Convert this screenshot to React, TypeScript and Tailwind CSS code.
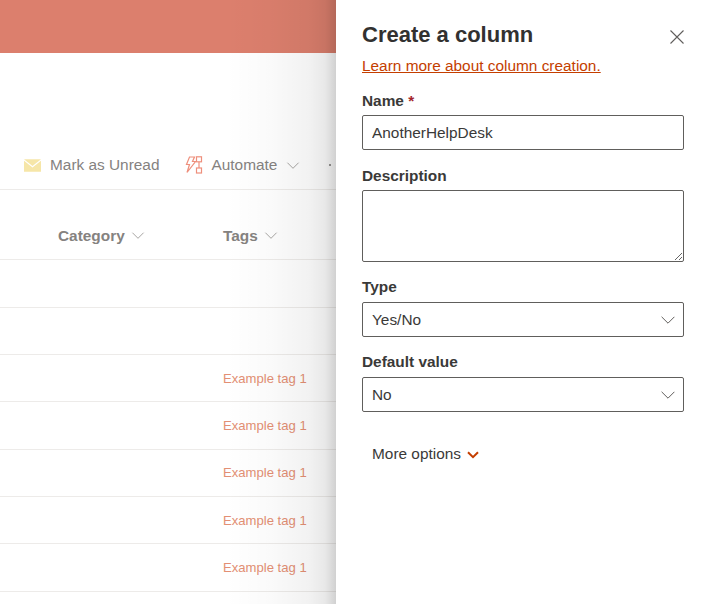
import React from "react";

const Chevron = ({ className = "" }: { className?: string }) => (
  <svg viewBox="0 0 14 8" fill="none" stroke="currentColor" strokeWidth="1" className={className}>
    <path d="M0.6 0.8 L7 7.2 L13.4 0.8" />
  </svg>
);

const Field = ({ label, required, tight, children }: { label: string; required?: boolean; tight?: boolean; children: React.ReactNode }) => (
  <div className="flex flex-col">
    <label className={tight ? "h-[23px] text-[15.4px] leading-[16px] font-bold text-[#3a3938]" : "h-[23px] text-[15.4px] leading-[17px] font-bold text-[#3a3938]"}>
      {label}
      {required && <span className="text-[#a4262c]"> *</span>}
    </label>
    {children}
  </div>
);

const Select = ({ value }: { value: string }) => (
  <div className="flex h-[35px] items-center justify-between rounded-[2px] border border-[#605e5c] pl-[9px] pr-[8px] text-[15.4px] text-[#3a3938]">
    <span>{value}</span>
    <Chevron className="h-[8px] w-[14px] text-[#605e5c]" />
  </div>
);

const rows = [false, false, true, true, true, true, true, false];

export default function App() {
  return (
    <div className="flex h-[604px] w-[710px] overflow-hidden bg-white font-['Liberation_Sans',Arial,sans-serif]">
      <div className="relative h-full w-[336px] shrink-0 overflow-hidden">
        <div className="h-[53px] bg-[#dc7f6d]" />
        <div className="flex h-[137px] items-end border-b border-[#edebe9] pb-[14px]">
          <div className="ml-[24px] flex h-[20px] items-center">
            <svg viewBox="0 0 18 13" className="h-[13px] w-[17px]">
              <path d="M0 0 H18 L9 7 Z" fill="#f6e6a8" />
              <path d="M0 1.6 L9 8.6 L18 1.6 V13 H0 Z" fill="#f6e6a8" />
            </svg>
            <span className="ml-[9px] text-[15.4px] text-[#85827f]">Mark as Unread</span>
            <svg viewBox="0 0 18 18" fill="none" stroke="#ee8f7c" strokeWidth="1.2" className="ml-[25px] h-[18px] w-[18px]">
              <rect x="11.5" y="0.8" width="5" height="5" />
              <rect x="11.5" y="12" width="5" height="5" />
              <path d="M14 6 V12" />
              <path d="M4.5 1 H9.5 L7.5 5.5 H10.5 L2 16.5 L4.5 8.5 H1.5 Z" />
            </svg>
            <span className="ml-[9px] text-[15.4px] text-[#85827f]">Automate</span>
            <Chevron className="ml-[9px] h-[7px] w-[14px] text-[#9a9896]" />
            <span className="ml-[29px] h-[2px] w-[2px] bg-[#9a9896]" />
          </div>
        </div>
        <div className="flex h-[70.4px] items-end border-b border-[#edebe9] pb-[12px] text-[15.4px] font-bold text-[#85827f]">
          <div className="ml-[58px] flex w-[165px] items-center">
            <span>Category</span>
            <Chevron className="ml-[6px] h-[7px] w-[14px] text-[#9a9896]" />
          </div>
          <div className="flex items-center">
            <span>Tags</span>
            <Chevron className="ml-[6px] h-[7px] w-[14px] text-[#9a9896]" />
          </div>
        </div>
        {rows.map((hasTag, i) => (
          <div key={i} className="flex h-[47.33px] items-center border-b border-[#edebe9] pl-[223px] pt-[0.5px] text-[13.1px] text-[#e38f74]">
            {hasTag && "Example tag 1"}
          </div>
        ))}
        <div className="pointer-events-none absolute inset-y-0 right-0 w-[110px] bg-[linear-gradient(to_right,#00000000_0%,#00000005_40%,#0000000d_75%,#00000017_90%,#0000002e_100%)]" />
      </div>
      <div className="relative flex h-full flex-1 flex-col bg-white px-[26px]">
        <h1 className="mt-[20px] h-[29px] text-[22px] leading-[29px] font-bold text-[#323130]">Create a column</h1>
        <a href="#" className="mt-[7px] h-[21px] text-[15.4px] leading-[20px] text-[#c43e00] underline">
          Learn more about column creation.
        </a>
        <div className="mt-[15px] flex flex-col gap-[17px]">
          <Field label="Name" required>
            <input
              readOnly
              value="AnotherHelpDesk"
              className="h-[35px] w-full rounded-[2px] border border-[#605e5c] px-[9px] text-[15.4px] text-[#3a3938] outline-none"
            />
          </Field>
          <Field label="Description">
            <textarea readOnly className="block h-[72px] w-full rounded-[2px] border border-[#605e5c] outline-none" />
          </Field>
          <Field label="Type" tight>
            <Select value="Yes/No" />
          </Field>
          <Field label="Default value" tight>
            <Select value="No" />
          </Field>
        </div>
        <div className="mt-[30px] ml-[10px] flex items-center text-[15.4px] text-[#3a3938]">
          <span>More options</span>
          <svg viewBox="0 0 12 8" fill="none" stroke="#c43e00" strokeWidth="2" className="ml-[6px] mt-[2px] h-[8px] w-[12px]">
            <path d="M1 1.2 L6 6.2 L11 1.2" />
          </svg>
        </div>
        <button className="absolute right-[26px] top-[30px] text-[#605e5c]" aria-label="Close">
          <svg viewBox="0 0 14 14" fill="none" stroke="currentColor" strokeWidth="1.1" className="h-[14px] w-[14px]">
            <path d="M0.5 0.5 L13.5 13.5 M13.5 0.5 L0.5 13.5" />
          </svg>
        </button>
      </div>
    </div>
  );
}
